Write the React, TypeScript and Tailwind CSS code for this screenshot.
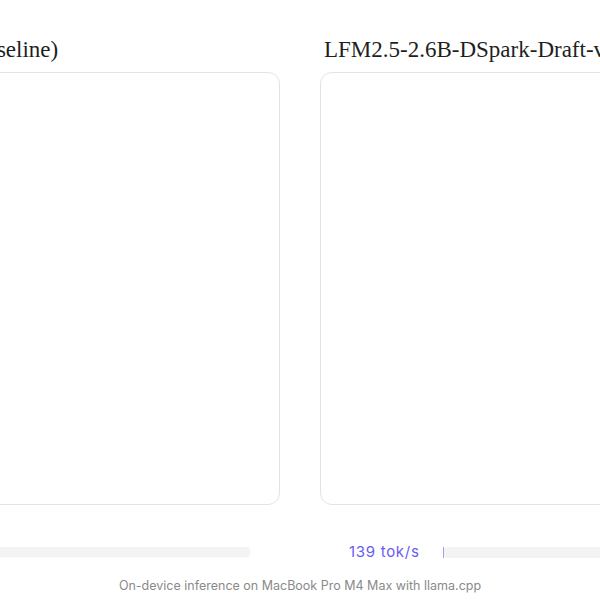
import React from 'react';

const serif = { fontFamily: '"Liberation Serif", "DejaVu Serif", serif' };
const sans = { fontFamily: 'Inter, "Noto Sans", sans-serif' };

const Column = ({
  title,
  rate,
  fill,
  tip,
  titleClass,
}: {
  title: string;
  rate: string;
  fill: number;
  tip?: boolean;
  titleClass: string;
}) => (
  <div className="flex flex-col">
    <h2 className={`${titleClass} pt-[35px] mb-[7px] text-[23px] leading-[30px] text-[#1f1f1f] whitespace-nowrap`} style={serif}>
      {title}
    </h2>
    <div className="h-[433px] rounded-xl border border-[#e3e3e3] bg-white"></div>
    <div className="mt-[37px] flex items-center h-5 px-[29px] gap-[23px]">
      <span className="text-[15px] leading-5 text-[#6a5cf0] whitespace-nowrap tracking-[0.7px]" style={sans}>
        {rate}
      </span>
      <div
        className={
          tip
            ? 'relative flex-1 h-[11px] bg-[#f3f3f3] [clip-path:polygon(0_0,calc(100%-3px)_0,100%_50%,calc(100%-3px)_100%,0_100%)]'
            : 'relative flex-1 h-[11px] bg-[#f3f3f3] rounded-full'
        }
      >
        <div className="h-full border-l border-[#a49de8]" style={{ width: `${fill}%` }}></div>
      </div>
    </div>
  </div>
);

const App = () => {
  return (
    <div className="w-[600px] h-[600px] overflow-hidden bg-white">
      <div className="w-[920px] ml-[-160px] flex flex-col">
        <div className="grid grid-cols-2 gap-10">
          <Column title="LFM2.5-2.6B (baseline)" rate="58 tok/s" fill={0} tip titleClass="ml-[-6px]" />
          <Column title="LFM2.5-2.6B-DSpark-Draft-v1" rate="139 tok/s" fill={0} titleClass="pl-1" />
        </div>
        <p className="mt-[15px] text-center text-[12.5px] leading-[18px] text-[#8a8a8a]" style={sans}>
          On-device inference on MacBook Pro M4 Max with llama.cpp
        </p>
      </div>
    </div>
  );
};

export default App;
